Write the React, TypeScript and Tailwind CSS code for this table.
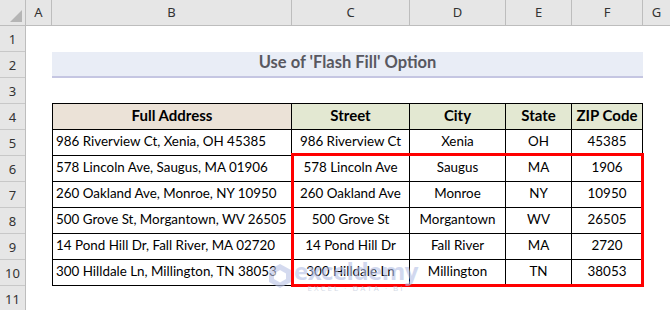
const cols = [
  { key: "A", w: "w-[26px]" },
  { key: "B", w: "w-[240px]" },
  { key: "C", w: "w-[118px]" },
  { key: "D", w: "w-[96px]" },
  { key: "E", w: "w-[66px]" },
  { key: "F", w: "w-[71px]" },
]

const rows = [
  ["986 Riverview Ct, Xenia, OH 45385", "986 Riverview Ct", "Xenia", "OH", "45385"],
  ["578 Lincoln Ave, Saugus, MA 01906", "578 Lincoln Ave", "Saugus", "MA", "1906"],
  ["260 Oakland Ave, Monroe, NY 10950", "260 Oakland Ave", "Monroe", "NY", "10950"],
  ["500 Grove St, Morgantown, WV 26505", "500 Grove St", "Morgantown", "WV", "26505"],
  ["14 Pond Hill Dr, Fall River, MA 02720", "14 Pond Hill Dr", "Fall River", "MA", "2720"],
  ["300 Hilldale Ln, Millington, TN 38053", "300 Hilldale Ln", "Millington", "TN", "38053"],
]

const cellW = ["w-[239px]", "w-[118px]", "w-[96px]", "w-[66px]", "w-[71px]"]

export default function App() {
  return (
    <div className="relative w-[670px] h-[310px] overflow-hidden bg-white font-['Lato',sans-serif] text-[13.4px] text-black">
      {/* column headers */}
      <div className="flex h-[26px] bg-[#e6e6e6] border-b border-[#bdbdbd] font-['Noto_Sans',sans-serif] text-[13px] text-[#333]">
        <div className="relative w-[26px] border-r border-[#bdbdbd]">
          <div className="absolute right-[3px] bottom-[3px] w-0 h-0 border-l-[12px] border-l-transparent border-b-[12px] border-b-[#b5b5b5]" />
        </div>
        {cols.map((c) => (
          <div key={c.key} className={`${c.w} flex items-center justify-center border-r border-[#bdbdbd]`}>
            {c.key}
          </div>
        ))}
        <div className="flex-1 flex items-center justify-center">G</div>
      </div>

      <div className="flex">
        {/* row numbers */}
        <div className="w-[26px] shrink-0 bg-[#e6e6e6] border-r border-[#bdbdbd] font-['Noto_Sans',sans-serif] text-[13px] text-[#333]">
          {Array.from({ length: 11 }, (_, i) => (
            <div key={i} className="h-[26px] flex items-end justify-center pb-[2px] border-b border-[#c8c8c8]">
              {i + 1}
            </div>
          ))}
        </div>

        <div className="flex-1 pl-[26px]">
          <div className="h-[26px]" />
          <div className="w-[591px] h-[26px] flex flex-col">
            <div className="h-[24px] bg-[#e9edf6] flex items-end justify-center pb-[1px] font-bold text-[16.5px] text-[#585860]">
              Use of 'Flash Fill' Option
            </div>
            <div className="h-[2px] bg-[#c5c6e2]" />
          </div>
          <div className="h-[25px]" />

          <div className="w-[591px] border-l border-t border-black">
            <div className="flex font-bold text-[15px]">
              {["Full Address", "Street", "City", "State", "ZIP Code"].map((h, i) => (
                <div
                  key={h}
                  className={`${cellW[i]} h-[26px] border-r border-b border-black flex items-end justify-center pb-[3px] ${
                    i === 0 ? "bg-[#ebe2d7]" : "bg-[#e3e8d2]"
                  }`}
                >
                  {h}
                </div>
              ))}
            </div>
            {rows.map((r) => (
              <div key={r[0]} className="flex">
                {r.map((v, i) => (
                  <div
                    key={i}
                    className={`${cellW[i]} h-[26px] border-r border-b border-black flex items-end pb-[4px] whitespace-nowrap ${
                      i === 0 ? "justify-start pl-[3px]" : "justify-center"
                    }`}
                  >
                    {v}
                  </div>
                ))}
              </div>
            ))}
          </div>
        </div>
      </div>

      {/* flash fill selection */}
      <div className="absolute left-[291px] top-[153px] w-[353px] h-[134px] border-[3px] border-[#ff0000]" />

      {/* watermark */}
      <div className="absolute left-[268px] top-[259px] flex items-center gap-[2px] opacity-60 pointer-events-none">
        <svg width="24" height="26" viewBox="0 0 24 26">
          <path d="M12 1 L23 7 L23 19 L12 25 L1 19 L1 7 Z" fill="#b9c3e6" />
          <path d="M12 7 L18 10.5 L18 16 L12 19.5 L6 16 L6 10.5 Z" fill="#ffffff" />
        </svg>
        <div className="flex flex-col items-center leading-none">
          <span className="font-['Open_Sans',sans-serif] font-bold text-[24px] text-[#b3bfe6] tracking-[-0.5px]">exceldemy</span>
          <span className="font-['Open_Sans',sans-serif] text-[8px] text-[#b8bfd4] tracking-[2px] mt-[1px]">EXCEL · DATA · BI</span>
        </div>
      </div>
    </div>
  )
}
